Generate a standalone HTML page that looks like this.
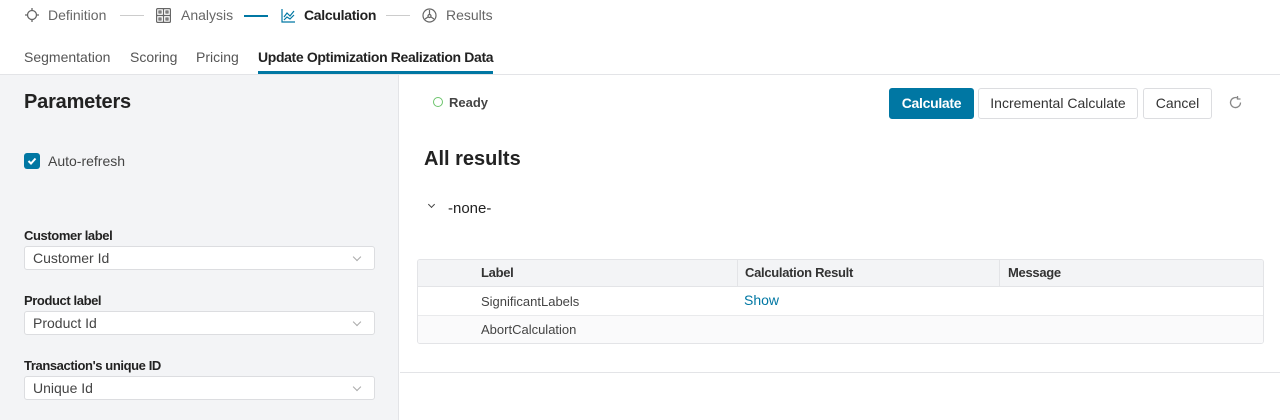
<!DOCTYPE html>
<html><head><style>
*{box-sizing:border-box;margin:0;padding:0}
body{width:1280px;height:420px;overflow:hidden;background:#fff;font-family:"Liberation Sans",sans-serif;color:#222;position:relative}
.a{position:absolute;white-space:nowrap}
.step{font-size:14px;color:#666}
.tab{font-size:14px;color:#555;top:49px}
.lbl{font-size:13px;color:#222;font-weight:bold;letter-spacing:-0.4px}
.sel{position:absolute;left:24px;width:351px;height:24px;background:#fff;border:1px solid #dcdde0;border-radius:3px;font-size:14px;color:#444;padding:3px 8px}
.sel:after{content:"";position:absolute;right:14px;top:7px;width:5px;height:5px;border-right:1px solid #aaa;border-bottom:1px solid #aaa;transform:rotate(45deg)}
.btn{position:absolute;top:88px;height:31px;border:1px solid #dcdde0;border-radius:3px;background:#fff;font-size:14px;color:#333;text-align:center;line-height:29px}
.td{font-size:13px;color:#444}
</style></head><body>
<svg class="a" style="left:25px;top:8px" width="14" height="14" viewBox="0 0 14 14" fill="none" stroke="#666" stroke-width="1.3"><circle cx="7" cy="7" r="4.5"/><path d="M7 0v3M7 11v3M0 7h3M11 7h3"/></svg>
<div class="a step" style="left:48px;top:7px">Definition</div>
<div class="a" style="left:120px;top:15px;width:24px;height:1px;background:#ccc"></div>
<svg class="a" style="left:156px;top:8px" width="15" height="15" viewBox="0 0 15 15" fill="none" stroke="#666" stroke-width="1.2"><rect x="0.6" y="0.6" width="13.8" height="13.8" rx="1"/><path d="M7.5 1v13M1 7.5h13"/><rect x="3" y="3" width="2" height="2"/><rect x="10" y="3" width="2" height="2"/><rect x="3" y="10" width="2" height="2"/><rect x="10" y="10" width="2" height="2"/></svg>
<div class="a step" style="left:181px;top:7px">Analysis</div>
<div class="a" style="left:244px;top:15px;width:24px;height:1.5px;background:#0077a3"></div>
<svg class="a" style="left:281px;top:8px" width="15" height="15" viewBox="0 0 15 15" fill="none" stroke="#0077a3" stroke-width="1.2"><path d="M1 1v13h13"/><path d="M3 9l3-4 3 3 4-5"/><path d="M3 12l3-3 3 2 4-4"/></svg>
<div class="a" style="left:304px;top:7px;font-size:14px;font-weight:bold;color:#222;letter-spacing:-0.3px">Calculation</div>
<div class="a" style="left:386px;top:15px;width:24px;height:1px;background:#ccc"></div>
<svg class="a" style="left:422px;top:8px" width="15" height="15" viewBox="0 0 15 15" fill="none" stroke="#666" stroke-width="1.2"><circle cx="7.5" cy="7.5" r="6.5"/><circle cx="7.5" cy="8" r="1.5"/><path d="M7.5 2v4.5M3 11l3-2M12 11l-3-2"/></svg>
<div class="a step" style="left:446px;top:7px">Results</div>
<div class="a tab" style="left:24px">Segmentation</div>
<div class="a tab" style="left:130px">Scoring</div>
<div class="a tab" style="left:196px">Pricing</div>
<div class="a tab" style="left:258px;color:#222;font-weight:bold;letter-spacing:-0.36px">Update Optimization Realization Data</div>
<div class="a" style="left:258px;top:71px;width:235px;height:3px;background:#0077a3"></div>
<div class="a" style="left:0;top:74px;width:1280px;height:1px;background:#e3e4e7"></div>
<div class="a" style="left:0;top:75px;width:399px;height:345px;background:#f3f4f6;border-right:1px solid #e3e4e7"></div>
<div class="a" style="left:24px;top:91px;font-size:20px;font-weight:bold;color:#222;letter-spacing:-0.2px">Parameters</div>
<div class="a" style="left:24px;top:153px;width:16px;height:16px;border-radius:3px;background:#0077a3"></div>
<svg class="a" style="left:27px;top:156px" width="10" height="10" viewBox="0 0 10 10" fill="none" stroke="#fff" stroke-width="2"><path d="M1.5 5l2.5 2.5 4.5-5"/></svg>
<div class="a" style="left:48px;top:153px;font-size:14px;color:#444">Auto-refresh</div>
<div class="a lbl" style="left:24px;top:228px">Customer label</div>
<div class="sel" style="top:246px">Customer Id</div>
<div class="a lbl" style="left:24px;top:293px">Product label</div>
<div class="sel" style="top:311px">Product Id</div>
<div class="a lbl" style="left:24px;top:358px">Transaction's unique ID</div>
<div class="sel" style="top:376px">Unique Id</div>
<div class="a" style="left:433px;top:97px;width:10px;height:10px;border-radius:50%;border:1.3px solid #6cc46c"></div>
<div class="a" style="left:449px;top:95px;font-size:13px;font-weight:bold;color:#444">Ready</div>
<div class="btn" style="left:889px;width:85px;background:#0077a3;border-color:#0077a3;color:#fff;font-weight:bold;letter-spacing:-0.3px">Calculate</div>
<div class="btn" style="left:978px;width:160px">Incremental Calculate</div>
<div class="btn" style="left:1143px;width:69px">Cancel</div>
<svg class="a" style="left:1228px;top:95px" width="15" height="15" viewBox="0 0 15 15" fill="none" stroke="#888" stroke-width="1.3"><path d="M12.5 7.5A5 5 0 1 1 10 3.2"/><path d="M9.5 1v3h3"/></svg>
<div class="a" style="left:424px;top:148px;font-size:20px;font-weight:bold;color:#222">All results</div>
<div class="a" style="left:429px;top:202px;width:5px;height:5px;border-right:1.3px solid #444;border-bottom:1.3px solid #444;transform:rotate(45deg)"></div>
<div class="a" style="left:448px;top:200px;font-size:15px;color:#222">-none-</div>
<div class="a" style="left:417px;top:259px;width:847px;height:85px;border:1px solid #e3e4e7;border-radius:3px;overflow:hidden">
 <div style="position:absolute;left:0;top:0;width:100%;height:27px;background:#f3f4f6;border-bottom:1px solid #e3e4e7"></div>
 <div style="position:absolute;left:319px;top:0;width:1px;height:27px;background:#e3e4e7"></div>
 <div style="position:absolute;left:581px;top:0;width:1px;height:27px;background:#e3e4e7"></div>
 <div style="position:absolute;left:0;top:55px;width:100%;height:1px;background:#e9eaec"></div>
 <div style="position:absolute;left:0;top:56px;width:100%;height:29px;background:#fafafb"></div>
</div>
<div class="a td" style="left:481px;top:265px;font-weight:bold;color:#333;letter-spacing:-0.3px">Label</div>
<div class="a td" style="left:745px;top:265px;font-weight:bold;color:#333;letter-spacing:-0.3px">Calculation Result</div>
<div class="a td" style="left:1008px;top:265px;font-weight:bold;color:#333;letter-spacing:-0.3px">Message</div>
<div class="a td" style="left:481px;top:294px">SignificantLabels</div>
<div class="a" style="left:744px;top:292px;font-size:14px;color:#0077a3">Show</div>
<div class="a td" style="left:481px;top:322px">AbortCalculation</div>
<div class="a" style="left:400px;top:372px;width:880px;height:1px;background:#e3e4e7"></div>
</body></html>
